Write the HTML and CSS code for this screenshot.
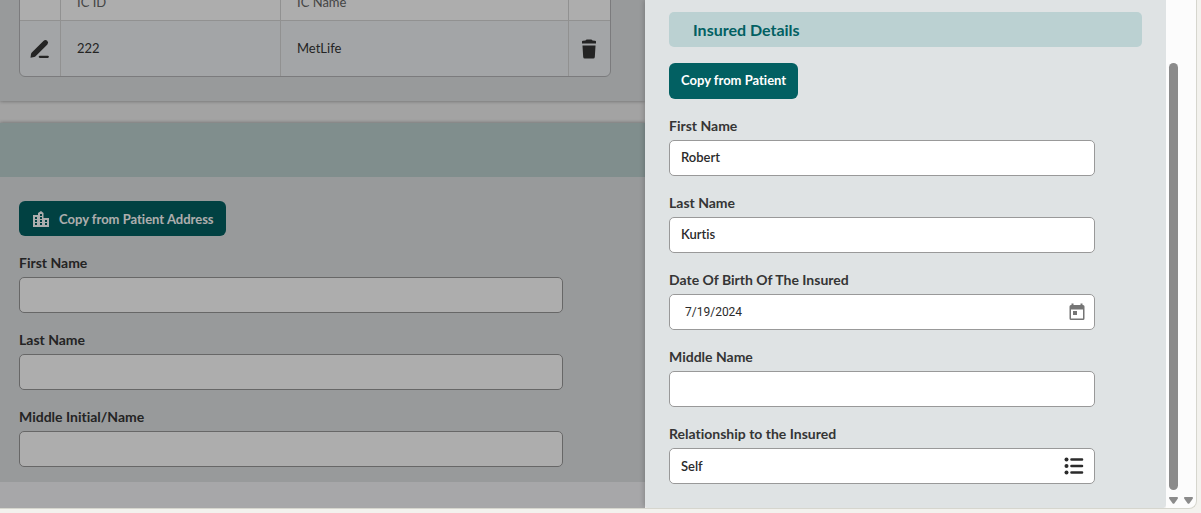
FILE: index.html
```html
<!DOCTYPE html>
<html lang="en">
<head>
  <meta charset="UTF-8">
  <meta name="viewport" content="width=device-width, initial-scale=1.0">
  <title>Insured Details</title>
  <link rel="stylesheet" href="styles.css">
</head>
<body>

  <div class="app">
    <!-- Page behind the drawer -->
    <main class="page">
      <section class="card insurance-card">
        <table class="grid">
          <colgroup>
            <col class="col-icon">
            <col class="col-id">
            <col>
            <col class="col-icon">
          </colgroup>
          <thead>
            <tr>
              <th></th>
              <th>IC ID</th>
              <th>IC Name</th>
              <th></th>
            </tr>
          </thead>
          <tbody>
            <tr>
              <td class="icon-cell">
                <button class="icon-btn" aria-label="Edit">
                  <svg width="20" height="20" viewBox="0 0 20 20">
                    <path d="M0.500 18.800 L1 15 Q1.200 14.200 1.800 13.600 L13.400 1.900 Q15.400 0.200 17.200 1.700 Q19 3.500 17.400 5.500 L5.600 17.200 Q5 17.800 4.200 18 Z" fill="#353535"/>
                    <path d="M9.800 17.800 H17.800" stroke="#353535" stroke-width="2.200" stroke-linecap="round"/>
                  </svg>
                </button>
              </td>
              <td>222</td>
              <td>MetLife</td>
              <td class="icon-cell">
                <button class="icon-btn" aria-label="Delete">
                  <svg width="16" height="20" viewBox="0 0 16 20">
                    <path d="M1 4.500 V2.500 Q1 1.800 2 1.700 L4.500 1.500 Q5 0.500 6 0.500 H10 Q11 0.500 11.500 1.500 L14 1.700 Q15 1.800 15 2.500 V4.500 Z" fill="#353535"/>
                    <path d="M1.500 6.500 H14.500 L13.800 18 Q13.700 19.500 12.300 19.500 H3.700 Q2.300 19.500 2.200 18 Z" fill="#353535"/>
                  </svg>
                </button>
              </td>
            </tr>
          </tbody>
        </table>
      </section>

      <section class="card">
        <div class="card-band"></div>
        <form class="card-body">
          <button type="button" class="btn btn-wide">
            <svg width="16" height="16" viewBox="0 0 16 16">
              <path fill="#fff" fill-rule="evenodd" d="M0 4 H5 V2 L8 0 L10.500 2 V7 H16 V16 H0 Z M2 6 V8 H4 V6 Z M2 9 V11 H4 V9 Z M2 12 V14 H4 V12 Z M7 3 V5 H9 V3 Z M7 6 V8 H9 V6 Z M7 9 V11 H9 V9 Z M7 12 V14 H9 V12 Z M12 9 V11 H14 V9 Z M12 12 V14 H14 V12 Z"/>
            </svg>
            Copy from Patient Address
          </button>
          <div class="field">
            <label for="addr-first">First Name</label>
            <input type="text" id="addr-first">
          </div>
          <div class="field">
            <label for="addr-last">Last Name</label>
            <input type="text" id="addr-last">
          </div>
          <div class="field">
            <label for="addr-middle">Middle Initial/Name</label>
            <input type="text" id="addr-middle">
          </div>
        </form>
      </section>
      <div class="page-end"></div>
      <div class="backdrop"></div>
    </main>

    <!-- Drawer -->
    <aside class="drawer">
      <h2 class="drawer-title">Insured Details</h2>
      <form>
        <button type="button" class="btn">Copy from Patient</button>
        <div class="field">
          <label for="first-name">First Name</label>
          <input type="text" id="first-name" value="Robert">
        </div>
        <div class="field">
          <label for="last-name">Last Name</label>
          <input type="text" id="last-name" value="Kurtis">
        </div>
        <div class="field">
          <label for="dob">Date Of Birth Of The Insured</label>
          <div class="input-group">
            <input type="text" id="dob" class="date-input" value="7/19/2024">
            <button type="button" class="icon-btn" aria-label="Open calendar">
              <svg width="16" height="18" viewBox="0 0 16 18">
                <path fill="#757575" fill-rule="evenodd" d="M2.500 0.500 H4.500 V2 H11.500 V0.500 H13.500 V2 H14 Q15.500 2 15.500 3.500 V15.500 Q15.500 17 14 17 H2 Q0.500 17 0.500 15.500 V3.500 Q0.500 2 2 2 H2.500 Z M2 6.500 V15.500 H14 V6.500 Z"/>
                <rect x="4" y="8" width="4" height="4" fill="#757575"/>
              </svg>
            </button>
          </div>
        </div>
        <div class="field">
          <label for="middle-name">Middle Name</label>
          <input type="text" id="middle-name">
        </div>
        <div class="field">
          <label for="relationship">Relationship to the Insured</label>
          <div class="input-group list-group">
            <input type="text" id="relationship" value="Self">
            <button type="button" class="icon-btn" aria-label="Choose relationship">
              <svg width="20" height="18" viewBox="0 0 20 18">
                <g fill="#2b2b2b">
                  <circle cx="2.500" cy="2.500" r="2"/>
                  <circle cx="2.500" cy="9" r="2"/>
                  <circle cx="2.500" cy="15.500" r="2"/>
                </g>
                <path d="M7.500 2.500 H18 M7.500 9 H18 M7.500 15.500 H18" stroke="#2b2b2b" stroke-width="2.600" stroke-linecap="round"/>
              </svg>
            </button>
          </div>
        </div>
      </form>
    </aside>

    <!-- Scroll tracks -->
    <div class="track">
      <div class="thumb"></div>
      <svg class="arrow" width="9" height="7" viewBox="0 0 9 7"><path d="M0.500 0 H8.500 Q9.300 0.800 8.700 1.800 L5.500 6.300 Q4.500 7.300 3.500 6.300 L0.300 1.800 Q-0.300 0.800 0.500 0 Z" fill="#8b8b8b"/></svg>
    </div>
    <div class="track">
      <svg class="arrow" width="9" height="7" viewBox="0 0 9 7"><path d="M0.500 0 H8.500 Q9.300 0.800 8.700 1.800 L5.500 6.300 Q4.500 7.300 3.500 6.300 L0.300 1.800 Q-0.300 0.800 0.500 0 Z" fill="#8b8b8b"/></svg>
    </div>
  </div>

</body>
</html>
```
FILE: styles.css
```css
* {
  box-sizing: border-box;
}

body {
  margin: 0;
  height: 100vh;
  padding: 0 4px 4px 0;
  background: #f3f2ee;
  color: #353535;
  font-family: Lato, sans-serif;
  font-size: 13px;
  font-variant-ligatures: none;
  overflow: hidden;
}

.app {
  display: flex;
  height: 100%;
  background: #fcfcfc;
  border-right: 1px solid #d6d6ce;
  border-bottom: 1px solid #d6d6ce;
  border-bottom-right-radius: 8px;
  overflow: hidden;
}

/* Page behind the drawer */
.page {
  position: relative;
  display: flex;
  flex-direction: column;
  flex: 1;
  min-width: 0;
  background: #f1f1f1;
  overflow: hidden;
}

.page-end {
  position: relative;
  flex: 1;
  background: #f6f7fa;
}

.backdrop {
  position: absolute;
  inset: 0;
  background: rgba(0, 0, 0, 0.32);
}

.card {
  flex-shrink: 0;
  background: #e0e3e5;
  box-shadow: 0 0 4px rgba(0, 0, 0, 0.4);
}

.insurance-card {
  padding: 0 22px 24px 19px;
  margin-bottom: 22px;
}

.card-band {
  height: 54px;
  background: #bdd2d0;
}

.card-body {
  padding: 24px 22px 15px 19px;
}

/* Table */
.grid {
  width: 98%;
  table-layout: fixed;
  margin-top: -16px;
  border: 1px solid #b5b6b8;
  border-radius: 6px;
  border-spacing: 0;
  background: #f1f4f6;
  overflow: hidden;
}

.col-icon {
  width: 41px;
}

.col-id {
  width: 220px;
}

.grid th,
.grid td {
  padding: 0 16px;
  text-align: left;
  font-weight: 400;
  border-right: 1px solid #d6d6d6;
}

.grid th {
  height: 36px;
  padding-bottom: 2px;
  color: #666;
  background: #fff;
  border-bottom: 1px solid #d6d6d6;
}

.grid td {
  height: 55px;
  padding-bottom: 1px;
}

.grid th:last-child,
.grid td:last-child {
  border-right: none;
}

.grid .icon-cell {
  padding: 0;
  text-align: center;
}

.icon-btn {
  display: inline-flex;
  padding: 0;
  border: none;
  background: none;
  vertical-align: middle;
  cursor: pointer;
}

/* Buttons */
.btn {
  display: inline-flex;
  align-items: center;
  gap: 10px;
  height: 36px;
  padding: 0 12px 2px;
  border: none;
  border-radius: 6px;
  background: #026062;
  color: #fff;
  font-family: inherit;
  font-size: 13px;
  font-variant-ligatures: inherit;
  font-weight: 700;
  cursor: pointer;
}

.btn-wide {
  height: 35px;
  padding: 0 12px 0 14px;
}

/* Form fields */
.field {
  width: 90%;
  margin-top: 17px;
}

.field label {
  display: block;
  margin-bottom: 4px;
  font-size: 14px;
  font-weight: 700;
  line-height: 20px;
}

.field input {
  display: block;
  width: 100%;
  height: 36px;
  padding: 0 11px 2px;
  border: 1px solid #999;
  border-radius: 5px;
  background: #fff;
  color: #2b2b2b;
  font-family: inherit;
  font-size: 13px;
  font-variant-ligatures: inherit;
  font-weight: 600;
}

.input-group {
  display: flex;
  align-items: center;
  padding-right: 9px;
  border: 1px solid #999;
  border-radius: 5px;
  background: #fff;
}

.list-group {
  padding-right: 10px;
}

.field .input-group input {
  flex: 1;
  min-width: 0;
  height: 34px;
  padding: 0 11px;
  border: none;
}

.field .input-group .date-input {
  padding-left: 15px;
  font-family: Roboto, sans-serif;
  font-size: 12px;
  font-weight: 400;
}

/* Drawer */
.drawer {
  position: relative;
  width: 521px;
  padding: 12px 24px;
  background: #dfe3e4;
  border-radius: 0 0 4px 4px;
  box-shadow: -1px 0 5px rgba(0, 0, 0, 0.2);
  clip-path: inset(0 0 0 -8px);
}

.drawer-title {
  margin: 0 0 16px;
  padding-left: 24px;
  border-radius: 5px;
  background: #bbd1d2;
  color: #026062;
  font-size: 16px;
  font-weight: 700;
  line-height: 35px;
}

/* Scroll tracks */
.track {
  display: flex;
  flex-direction: column;
  align-items: center;
  justify-content: flex-end;
  width: 15px;
  padding: 63px 0 4px;
}

.thumb {
  flex: 1;
  width: 9px;
  margin-bottom: 7px;
  border-radius: 5px;
  background: #8b8b8b;
}
```
